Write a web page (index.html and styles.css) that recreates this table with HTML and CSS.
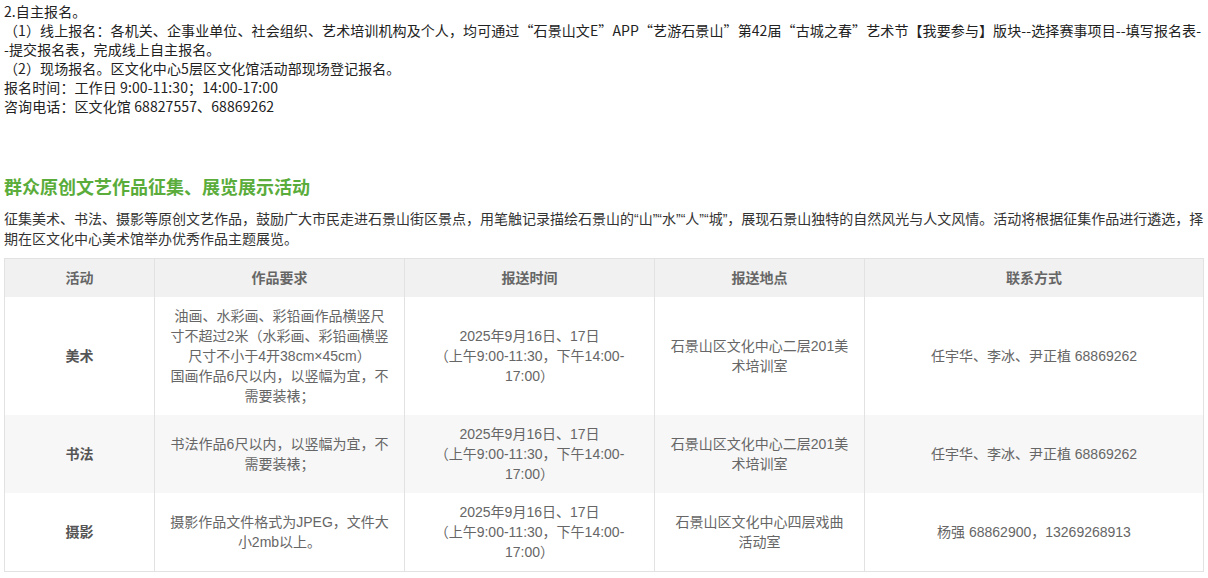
FILE: index.html
```html
<!DOCTYPE html>
<html lang="zh-CN">
<head>
<meta charset="utf-8">
<title>群众原创文艺作品征集、展览展示活动</title>
<link rel="stylesheet" href="styles.css">
</head>
<body>
<div class="page">
  <div class="signup">
    <p>2.自主报名。</p>
    <p>（1）线上报名：各机关、企事业单位、社会组织、艺术培训机构及个人，均可通过“石景山文E”APP“艺游石景山”第42届“古城之春”艺术节【我要参与】版块--选择赛事项目--填写报名表--提交报名表，完成线上自主报名。</p>
    <p>（2）现场报名。区文化中心5层区文化馆活动部现场登记报名。</p>
    <p>报名时间：工作日 9:00-11:30；14:00-17:00</p>
    <p>咨询电话：区文化馆 68827557、68869262</p>
  </div>

  <h2 class="section-title">群众原创文艺作品征集、展览展示活动</h2>
  <p class="intro">征集美术、书法、摄影等原创文艺作品，鼓励广大市民走进石景山街区景点，用笔触记录描绘石景山的“山”“水”“人”“城”，展现石景山独特的自然风光与人文风情。活动将根据征集作品进行遴选，择期在区文化中心美术馆举办优秀作品主题展览。</p>

  <table class="works">
    <colgroup>
      <col class="c1"><col class="c2"><col class="c3"><col class="c4"><col class="c5">
    </colgroup>
    <thead>
      <tr><th>活动</th><th>作品要求</th><th>报送时间</th><th>报送地点</th><th>联系方式</th></tr>
    </thead>
    <tbody>
      <tr>
        <td class="name">美术</td>
        <td>油画、水彩画、彩铅画作品横竖尺寸不超过2米（水彩画、彩铅画横竖尺寸不小于4开38cm×45cm）<br>国画作品6尺以内，以竖幅为宜，不需要装裱；</td>
        <td>2025年9月16日、17日<br>（上午9:00-11:30，下午14:00-<wbr>17:00）</td>
        <td>石景山区文化中心二层201美术培训室</td>
        <td>任宇华、李冰、尹正植 68869262</td>
      </tr>
      <tr class="alt">
        <td class="name">书法</td>
        <td>书法作品6尺以内，以竖幅为宜，不需要装裱；</td>
        <td>2025年9月16日、17日<br>（上午9:00-11:30，下午14:00-<wbr>17:00）</td>
        <td>石景山区文化中心二层201美术培训室</td>
        <td>任宇华、李冰、尹正植 68869262</td>
      </tr>
      <tr>
        <td class="name">摄影</td>
        <td>摄影作品文件格式为JPEG，文件大小2mb以上。</td>
        <td>2025年9月16日、17日<br>（上午9:00-11:30，下午14:00-<wbr>17:00）</td>
        <td>石景山区文化中心四层戏曲活动室</td>
        <td>杨强 68862900，13269268913</td>
      </tr>
    </tbody>
  </table>
</div>
</body>
</html>
```

FILE: styles.css
```css
html, body {
  margin: 0;
  padding: 0;
  background: #ffffff;
}

.page {
  padding: 2px 4px 0 4px;
}

.signup p {
  margin: 0;
  font-family: "Noto Sans CJK SC", sans-serif;
  font-size: 14px;
  line-height: 19px;
  letter-spacing: 0.1px;
  color: #222222;
  word-break: break-all;
}

.section-title {
  margin: 57px 0 0 0;
  font-family: "Noto Sans CJK SC", sans-serif;
  font-size: 18px;
  font-weight: 700;
  line-height: 26px;
  color: #5aac3b;
}

.intro {
  margin: 10px 0 9px 0;
  font-family: "Liberation Sans", "Noto Sans CJK SC", sans-serif;
  font-size: 14px;
  line-height: 20px;
  color: #333333;
}

.works {
  width: 1200px;
  border-collapse: collapse;
  table-layout: fixed;
  border: 1px solid #e2e2e2;
  font-family: "Liberation Sans", "Noto Sans CJK SC", sans-serif;
  font-size: 14px;
  line-height: 20px;
  color: #666666;
}

.works .c1 { width: 150px; }
.works .c2 { width: 250px; }
.works .c3 { width: 250px; }
.works .c4 { width: 210px; }
.works .c5 { width: auto; }

.works th,
.works td {
  padding: 9px 15px;
  text-align: center;
  vertical-align: middle;
  border-left: 1px solid #e2e2e2;
  border-right: 1px solid #e2e2e2;
}

.works th {
  background: #f1f1f1;
  font-weight: 700;
  color: #666666;
}

.works td.name {
  font-weight: 700;
  color: #555555;
}

.works tr.alt td {
  background: #f7f7f7;
}
```
